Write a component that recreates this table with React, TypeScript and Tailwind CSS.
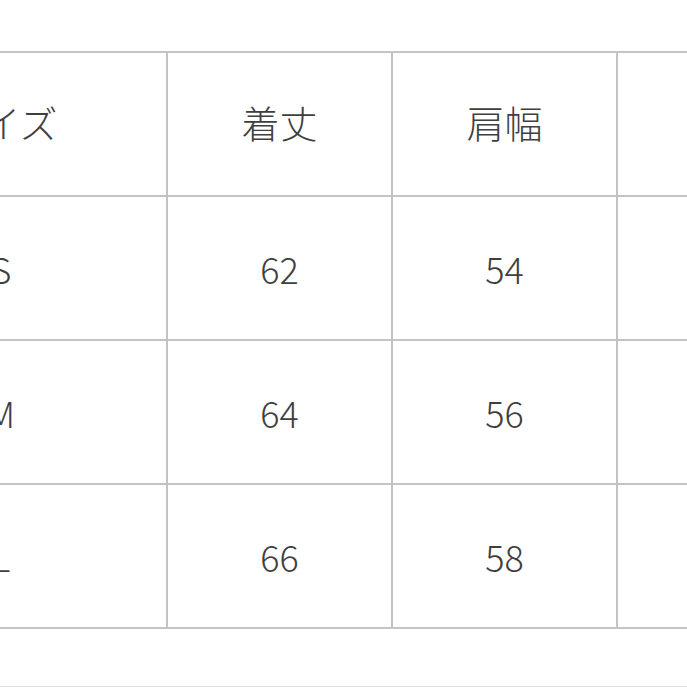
import React from 'react';

const headers = ['サイズ', '着丈', '肩幅', '身幅'];
const rows = [
  ['S', '62', '54', '60'],
  ['M', '64', '56', '62'],
  ['L', '66', '58', '64'],
];

const App: React.FC = () => {
  return (
    <div
      className="w-[687px] h-[687px] overflow-hidden bg-white text-[#3f3f3f]"
      style={{ fontFamily: '"Noto Sans CJK JP", "Noto Sans", sans-serif' }}
    >
      <div className="pt-[51px] ml-[-166px] w-[1010px]">
        {/* Size table */}
        <div className="grid grid-cols-[330px_223px_223px_223px] gap-[2px] p-[2px] bg-[#c3c3c3]">
          {headers.map((h) => (
            <div key={h} className="h-[142px] bg-white flex items-center justify-center text-[38px] font-light pb-[6px]">
              {h}
            </div>
          ))}
          {rows.map((r) =>
            r.map((c, i) => (
              <div
                key={r[0] + i}
                className="h-[142px] bg-white flex items-center justify-center text-[36px] font-light"
              >
                {c}
              </div>
            ))
          )}
        </div>
        <div className="mt-[57px] h-px bg-[#e2e2e2]" />
      </div>
    </div>
  );
};

export default App;
